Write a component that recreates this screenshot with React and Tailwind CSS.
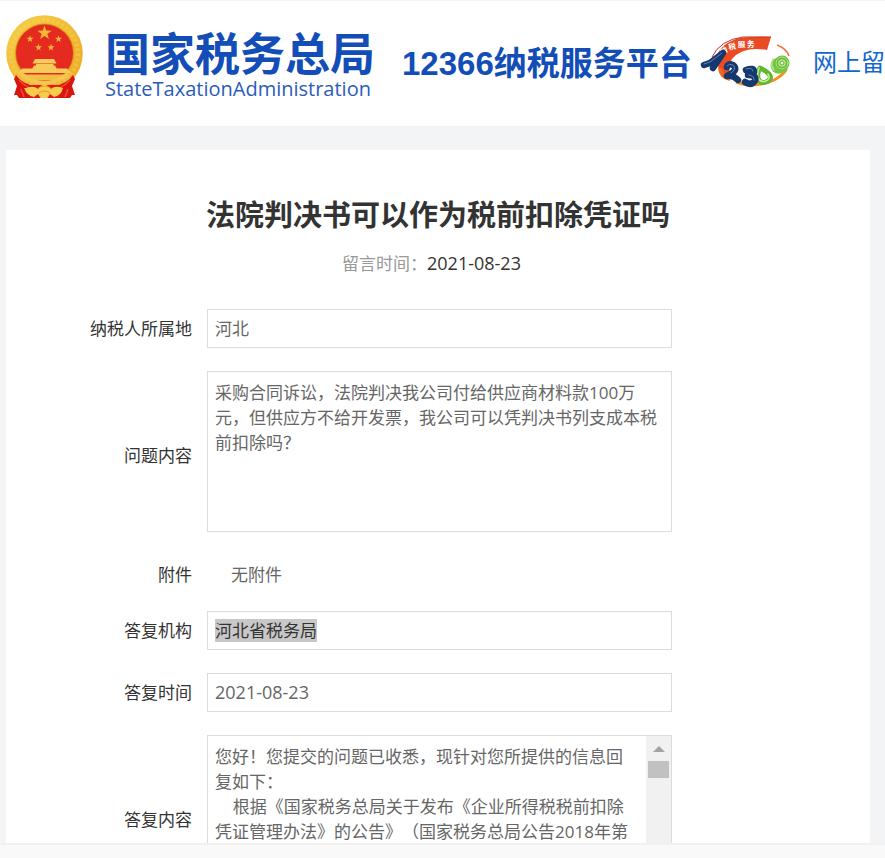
import React from "react";

const REPLY =
  "您好！您提交的问题已收悉，现针对您所提供的信息回复如下：\n    根据《国家税务总局关于发布《企业所得税税前扣除凭证管理办法》的公告》（国家税务总局公告2018年第";

const QUESTION =
  "采购合同诉讼，法院判决我公司付给供应商材料款100万元，但供应方不给开发票，我公司可以凭判决书列支成本税前扣除吗？";

const BOX = "border border-[#dcdcdc] bg-white px-[7px] text-[#666] outline-none";

function Star({ x, y, r }) {
  const points = Array.from({ length: 10 }, (_, i) => {
    const radius = i % 2 ? r * 0.4 : r;
    const a = (Math.PI / 5) * i - Math.PI / 2;
    return `${(x + radius * Math.cos(a)).toFixed(2)},${(y + radius * Math.sin(a)).toFixed(2)}`;
  }).join(" ");
  return <polygon points={points} fill="#f3b53a" />;
}

function Emblem() {
  return (
    <svg className="h-[84px] w-[78px] shrink-0" viewBox="0 0 78 84" aria-hidden="true">
      <defs>
        <linearGradient id="gold" x1="0" y1="0" x2="1" y2="1">
          <stop offset="0" stopColor="#f7cf4c" />
          <stop offset="0.5" stopColor="#f1bb33" />
          <stop offset="1" stopColor="#eba823" />
        </linearGradient>
      </defs>
      <circle cx="38.5" cy="38.5" r="38.3" fill="url(#gold)" />
      <circle cx="38.5" cy="38.5" r="33.5" fill="none" stroke="#f9d95f" strokeWidth="4" strokeDasharray="3 2" opacity="0.35" />
      <circle cx="38.5" cy="38" r="29.5" fill="#d8951c" />
      <circle cx="38.5" cy="38" r="28.5" fill="#e52a20" />
      <Star x={38.5} y={18} r={7.5} />
      <Star x={24} y={24} r={3.7} />
      <Star x={52.5} y={24} r={3.7} />
      <Star x={32.5} y={32.5} r={3.7} />
      <Star x={45} y={32.5} r={3.7} />
      <path d="M29 44h19l2.500 4.500h-24zM30 49h17.500v1.500H30zM28 50.500h21l2 3.500H26zM16 53.500h45l4 4.500H12z" fill="#f6cb57" />
      <path d="M12 59.500h53l-5 6H17z" fill="#f1bd45" />
      <path d="M15 59q23.500 18 47 0" fill="none" stroke="#f3c650" strokeWidth="4" />
      <path d="M10 60q6 9 19 11l-4 12H13l-2-3H8l3-9-3-7z" fill="#d9150f" />
      <path d="M67 60q-6 9-19 11l4 12h12l2-3h3l-3-9 3-7z" fill="#d9150f" />
      <path d="M13 65q7 7 13 9M64 65q-7 7-13 9M15 74l3 8M62 74l-3 8" stroke="#f04a3a" strokeWidth="1.5" fill="none" />
      <path d="M25 70h27l2 13H23z" fill="#e01c14" />
      <path d="M20 73q8-3 12 1l6.500-6 6.500 6q4-4 12-1-2 8-9 9l-4-3-2.500 4h-7l-2.500-4-4 3q-7-1-10-9z" fill="#f6cb4e" />
      <path d="M31 74q7.500-6 15 0M33 78q5.500-4 11 0" fill="none" stroke="#e19a20" />
    </svg>
  );
}

function HotlineLogo() {
  return (
    <svg className="h-[60px] w-[96px] shrink-0" viewBox="0 0 96 60" aria-hidden="true">
      <path d="M18 27Q21 13 38 7Q48 4 73 5L69 18Q45 14 34 27Q28 36 34 46L27 47Q19 39 20 29z" fill="#ea4a24" />
      <path d="M14 25Q22 8 45 5L73 5" fill="none" stroke="#c9301c" strokeWidth="1" />
      <path d="M22 36Q23 45 32 47" fill="none" stroke="#f0651f" strokeWidth="4" />
      <path d="M38 50Q56 57 76 48Q84 44 88 38" fill="none" stroke="#f6911e" strokeWidth="3" />
      <path d="M79 13Q89 17 91 24" fill="none" stroke="#ec7440" strokeWidth="1.5" />
      <g fill="#fff" fontFamily="'Noto Sans CJK SC', sans-serif" fontSize="7.5" fontWeight="700">
        <text x="23" y="22" transform="rotate(-20 23 22)">纳</text>
        <text x="31" y="18" transform="rotate(-12 31 18)">税</text>
        <text x="40" y="15.5" transform="rotate(-4 40 15)">服</text>
        <text x="49" y="14.5">务</text>
      </g>
      <g fill="none" strokeLinecap="round" strokeLinejoin="round">
        <path d="M80 28Q72 31 77 38Q81 41 87 37" stroke="#78c743" strokeWidth="5" />
        <circle cx="84" cy="31" r="5.500" stroke="#6cbd35" strokeWidth="4" fill="#e9f7dc" />
        <circle cx="84" cy="31" r="6" stroke="#b5e58d" strokeWidth="1" />
        <circle cx="84" cy="31" r="2" stroke="#78c743" strokeWidth="1.500" />
        <path d="M75 27Q72 33 76 38" stroke="#b5e58d" strokeWidth="1.500" />
        <path d="M62 36Q59 40 60 46Q62 52 68 50Q75 47 71 42Q67 38 62 36z" stroke="#62b52e" strokeWidth="5" fill="#fff" />
        <path d="M61 36Q59 41 60 46Q63 51 68 49Q73 47 70 42" stroke="#c5ec9f" strokeWidth="1.500" />
        <g stroke="#15396f" strokeWidth="6.500">
          <path d="M6 33L12 31 25 21 15 36" />
          <path d="M29 35Q30 31 35 33Q40 37 34 41L29 44Q35 43 40 48" />
          <path d="M48 38Q56 35 56 40Q55 43 50 43Q59 43 57 49Q53 54 47 50" />
        </g>
        <g stroke="#5d86b8" strokeWidth="1">
          <path d="M6 32L12 30 24 21" />
          <path d="M29 34Q31 31 35 33Q39 37 33 41" />
          <path d="M48 37Q55 35 55 39M51 43Q57 44 56 48" />
        </g>
      </g>
    </svg>
  );
}

function Row({ id, label, tall = false, children }) {
  return (
    <div className="flex items-center gap-[15px]">
      <label htmlFor={id} className="w-[186px] shrink-0 text-right text-[#333]">
        {label}
      </label>
      <div className={tall ? "min-w-0 flex-1 pb-[7px]" : "min-w-0 flex-1"}>{children}</div>
    </div>
  );
}

export default function App() {
  return (
    <div className="flex h-screen flex-col overflow-hidden bg-[#f3f4f6] font-['Open_Sans','Noto_Sans_CJK_SC',sans-serif] text-[17px] leading-[25px] [text-spacing-trim:space-all]">
      <header className="flex h-[126px] shrink-0 items-start overflow-hidden border-t border-[#f3f3f3] bg-white pl-[6px] whitespace-nowrap text-[#124db8]">
        <div className="mt-[14px] flex shrink-0">
          <Emblem />
        </div>
        <div className="mt-[28px] ml-[21px] w-[276px] shrink-0">
          <div className="text-[45px] leading-[50px] font-bold">国家税务总局</div>
          <div className="text-[20px] leading-[20px] text-[#2a5cbb]">StateTaxationAdministration</div>
        </div>
        <div className="mt-[39px] ml-[21px] w-[294px] shrink-0 font-['Liberation_Sans','Noto_Sans_CJK_SC',sans-serif] text-[33px] leading-[48px] font-bold">
          12366纳税服务平台
        </div>
        <div className="mt-[31px] ml-[2px] flex shrink-0">
          <HotlineLogo />
        </div>
        <a href="#message" className="mt-[43px] ml-[19px] shrink-0 text-[24px] leading-[36px] text-[#1266cf]">
          网上留
        </a>
      </header>

      <main className="min-h-0 flex-1 overflow-hidden pt-[24px] pr-[15px] pl-[6px]">
        <article className="min-h-full bg-white pt-[46px]">
          <h1 className="text-center text-[29px] leading-[38px] font-bold text-[#333]">法院判决书可以作为税前扣除凭证吗</h1>
          <p className="mt-[17px] pr-[13px] text-center leading-[24px] text-[#999]">
            留言时间：<time className="text-[18px] text-[#333]">2021-08-23</time>
          </p>

          <form className="mt-[33px] mr-[198px] flex flex-col gap-[23px]">
            <Row id="region" label="纳税人所属地">
              <input id="region" readOnly defaultValue="河北" className={`block h-[39px] w-full pb-[2px] ${BOX}`} />
            </Row>
            <Row id="question" label="问题内容" tall>
              <textarea
                id="question"
                readOnly
                defaultValue={QUESTION}
                className={`block h-[161px] w-full resize-none overflow-hidden py-[8px] ${BOX}`}
              />
            </Row>
            <div className="-mt-[7px] flex items-center gap-[15px] pt-[7px] leading-[26px]">
              <span className="w-[186px] shrink-0 text-right text-[#333]">附件</span>
              <span className="pl-[24px] text-[#666]">无附件</span>
            </div>
            <Row id="agency" label="答复机构">
              <div className="flex h-[39px] items-center border border-[#dcdcdc] px-[7px]">
                <output id="agency" className="bg-[#c8c8c8] leading-[23px] text-[#333]">
                  河北省税务局
                </output>
              </div>
            </Row>
            <Row id="reply-date" label="答复时间">
              <input id="reply-date" readOnly defaultValue="2021-08-23" className={`block h-[39px] w-full pb-[2px] text-[18px] ${BOX}`} />
            </Row>
            <Row id="reply" label="答复内容" tall>
              <div className="flex h-[161px] border border-[#dcdcdc]">
                <textarea
                  id="reply"
                  readOnly
                  defaultValue={REPLY}
                  className="block h-full min-w-0 flex-1 resize-none overflow-hidden px-[7px] py-[8px] text-[#666] outline-none"
                />
                <div className="flex w-[25px] shrink-0 flex-col items-center bg-[#f1f1f1] pt-[10px]" aria-hidden="true">
                  <svg className="h-[6px] w-[12px]" viewBox="0 0 12 6">
                    <path d="M6 0L12 6H0z" fill="#a3a3a3" />
                  </svg>
                  <div className="mt-[9px] h-[17px] w-[21px] bg-[#c1c1c1]" />
                </div>
              </div>
            </Row>
          </form>
        </article>
      </main>

      <footer className="h-[15px] shrink-0 border-t-2 border-[#f0f0f0] bg-[#f9f9f9]" />
    </div>
  );
}
